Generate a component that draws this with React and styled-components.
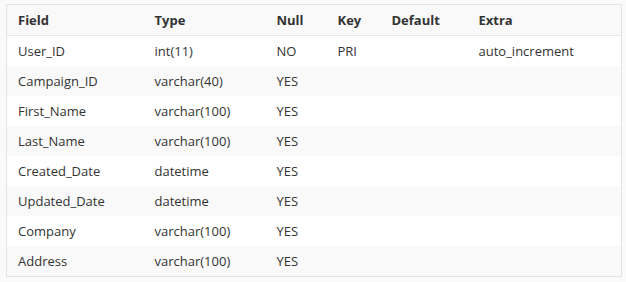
import React from 'react';
import styled, { createGlobalStyle } from 'styled-components';

const columns = [
  { key: 'field', label: 'Field', width: 137 },
  { key: 'type', label: 'Type', width: 122 },
  { key: 'nul', label: 'Null', width: 61 },
  { key: 'key', label: 'Key', width: 54 },
  { key: 'def', label: 'Default', width: 87 },
  { key: 'extra', label: 'Extra', width: 'auto' },
];

const rows = [
  { field: 'User_ID', type: 'int(11)', nul: 'NO', key: 'PRI', def: '', extra: 'auto_increment' },
  { field: 'Campaign_ID', type: 'varchar(40)', nul: 'YES' },
  { field: 'First_Name', type: 'varchar(100)', nul: 'YES' },
  { field: 'Last_Name', type: 'varchar(100)', nul: 'YES' },
  { field: 'Created_Date', type: 'datetime', nul: 'YES' },
  { field: 'Updated_Date', type: 'datetime', nul: 'YES' },
  { field: 'Company', type: 'varchar(100)', nul: 'YES' },
  { field: 'Address', type: 'varchar(100)', nul: 'YES' },
];

function App() {
  return (
    <>
      <GlobalStyle />
      <Wrapper>
        <Table>
          <colgroup>
            {columns.map((c) => (
              <col key={c.key} style={{ width: c.width }} />
            ))}
          </colgroup>
          <thead>
            <tr>
              {columns.map((c) => (
                <HeadCell key={c.key}>{c.label}</HeadCell>
              ))}
            </tr>
          </thead>
          <tbody>
            {rows.map((row, i) => (
              <Row key={row.field} $striped={i % 2 === 1}>
                {columns.map((c) => (
                  <Cell key={c.key}>{row[c.key] || ''}</Cell>
                ))}
              </Row>
            ))}
          </tbody>
        </Table>
      </Wrapper>
    </>
  );
}

const GlobalStyle = createGlobalStyle`
  html, body {
    margin: 0;
    padding: 0;
    background: #fafafa;
  }
`;

const Wrapper = styled.div`
  padding: 4px 5px 0 6px;
  font-family: 'Open Sans', sans-serif;
`;

const Table = styled.table`
  width: 616px;
  border-collapse: collapse;
  table-layout: fixed;
  background: #fff;
  border: 1px solid #e3e3e3;
  font-size: 13px;
  color: #333;
`;

const HeadCell = styled.th`
  height: 30px;
  padding: 0 0 0 11px;
  text-align: left;
  font-weight: 700;
  background: #f9f9f9;
  border-bottom: 1px solid #e6e6e6;
`;

const Row = styled.tr`
  background: ${(p) => (p.$striped ? '#f9f9f9' : '#fff')};
`;

const Cell = styled.td`
  height: 30px;
  padding: 0 0 0 11px;
  white-space: nowrap;
`;

export default App;
